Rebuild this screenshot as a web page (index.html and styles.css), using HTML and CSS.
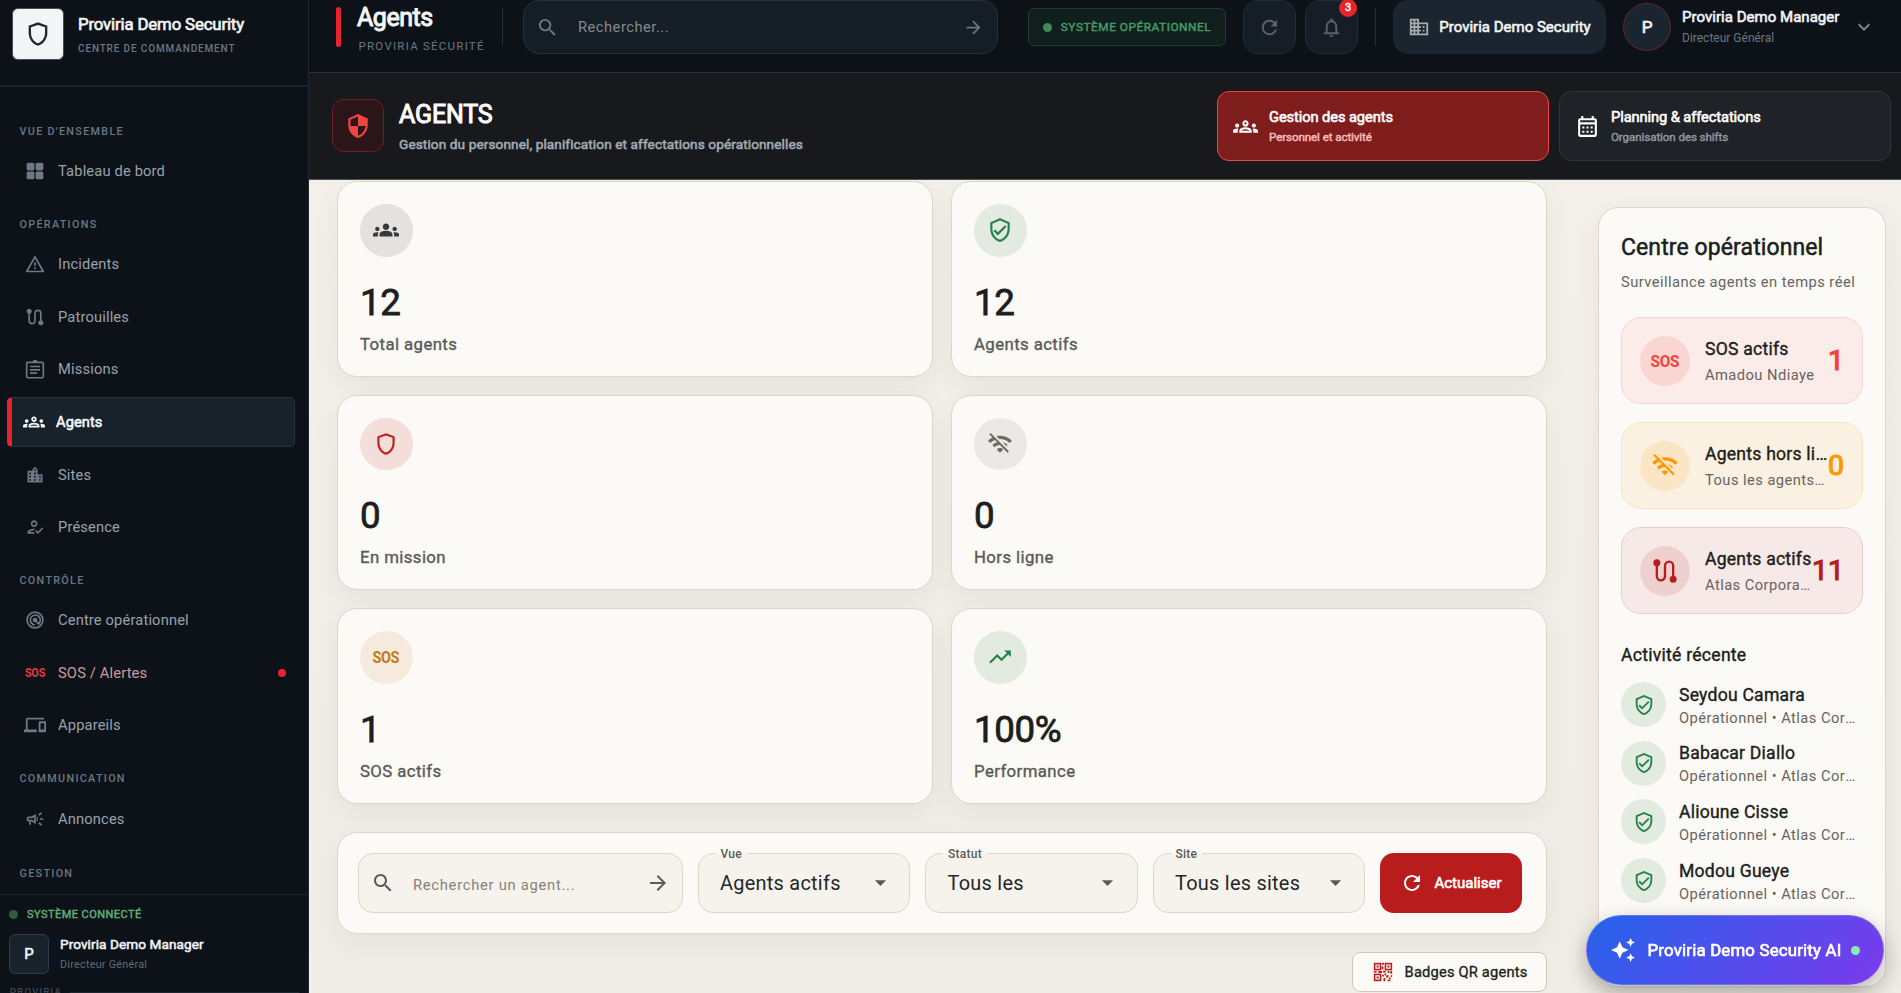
FILE: index.html
```
<!DOCTYPE html>
<html lang="fr">
<head>
  <meta charset="UTF-8" />
  <meta name="viewport" content="width=device-width, initial-scale=1.0"/>
  <title>Agents - Proviria Demo Security</title>
  <link rel="stylesheet" href="styles.css">
</head>
<body>

  <!-- Icon sprite -->
  <svg class="sprite" xmlns="http://www.w3.org/2000/svg">
    <symbol id="i-shield" viewBox="0 0 24 24"><path d="M12 2L4 5v6.090c0 5.050 3.410 9.760 8 10.910 4.590-1.150 8-5.860 8-10.910V5l-8-3zm6 9.090c0 4-2.550 7.700-6 8.830-3.450-1.130-6-4.820-6-8.830V6.310l6-2.120 6 2.120v4.780z"/></symbol>
    <symbol id="i-verified" viewBox="0 0 24 24"><path d="M12 1L3 5v6c0 5.550 3.840 10.740 9 12 5.160-1.260 9-6.450 9-12V5l-9-4zm7 10c0 4.520-2.980 8.690-7 9.930-4.020-1.240-7-5.410-7-9.930V6.300l7-3.110 7 3.110V11zM7.410 11.590L6 13l4 4 8-8-1.410-1.420L10 14.170z"/></symbol>
    <symbol id="i-security" viewBox="0 0 24 24"><path d="M12 1L3 5v6c0 5.550 3.840 10.740 9 12 5.160-1.260 9-6.450 9-12V5l-9-4zm0 10.990h7c-.53 4.120-3.280 7.790-7 8.940V12H5V6.300l7-3.110v8.800z"/></symbol>
    <symbol id="i-dashboard" viewBox="0 0 24 24"><rect x="2" y="2" width="9.300" height="9.300" rx="2"/><rect x="12.700" y="2" width="9.300" height="9.300" rx="2"/><rect x="2" y="12.700" width="9.300" height="9.300" rx="2"/><rect x="12.700" y="12.700" width="9.300" height="9.300" rx="2"/></symbol>
    <symbol id="i-warning" viewBox="0 0 24 24"><path d="M12 3.500L22 21H2z" fill="none" stroke="currentColor" stroke-width="2" stroke-linejoin="round"/><path d="M11 10h2v4.500h-2zM11 16h2v2h-2z"/></symbol>
    <symbol id="i-route" viewBox="0 0 24 24"><path d="M5 5v11.500a3.500 3.500 0 0 0 7 0v-9a3.500 3.500 0 0 1 7 0V19" fill="none" stroke="currentColor" stroke-width="2"/><circle cx="5" cy="5" r="3"/><circle cx="19" cy="19" r="3"/></symbol>
    <symbol id="i-assignment" viewBox="0 0 24 24"><rect x="2" y="4" width="20" height="18.500" rx="1.500" fill="none" stroke="currentColor" stroke-width="2"/><path d="M9 4a3 3 0 0 1 6 0zM6 8h12v2H6zM6 12h12v2H6zM6 16h8.500v2H6z"/></symbol>
    <symbol id="i-groups" viewBox="0 0 24 24"><path d="M12 12.750c1.630 0 3.070.39 4.240.9 1.080.48 1.760 1.560 1.760 2.730V18H6v-1.610c0-1.180.68-2.260 1.760-2.730 1.170-.52 2.610-.91 4.240-.91zM4 13c1.100 0 2-.9 2-2s-.9-2-2-2-2 .9-2 2 .9 2 2 2zm1.130 1.100c-.37-.06-.74-.1-1.130-.1-.99 0-1.930.21-2.780.58C.48 14.900 0 15.620 0 16.430V18h4.500v-1.610c0-.83.23-1.610.63-2.290zM20 13c1.100 0 2-.9 2-2s-.9-2-2-2-2 .9-2 2 .9 2 2 2zm4 3.430c0-.81-.48-1.530-1.220-1.850-.85-.37-1.790-.58-2.780-.58-.39 0-.76.04-1.130.1.4.68.63 1.460.63 2.290V18H24v-1.570zM12 6c1.660 0 3 1.340 3 3s-1.340 3-3 3-3-1.340-3-3 1.340-3 3-3z"/></symbol>
    <symbol id="i-groups-outline" viewBox="0 0 24 24"><path d="M4 13c1.100 0 2-.9 2-2s-.9-2-2-2-2 .9-2 2 .9 2 2 2zm1.130 1.100c-.37-.06-.74-.1-1.130-.1-.99 0-1.930.21-2.780.58C.48 14.900 0 15.620 0 16.430V18h4.500v-1.610c0-.83.23-1.610.63-2.290zM20 13c1.100 0 2-.9 2-2s-.9-2-2-2-2 .9-2 2 .9 2 2 2zm4 3.430c0-.81-.48-1.530-1.220-1.850-.85-.37-1.790-.58-2.780-.58-.39 0-.76.04-1.130.1.4.68.63 1.460.63 2.290V18H24v-1.570zM16.240 13.650c-1.170-.52-2.610-.9-4.240-.9s-3.070.39-4.240.9C6.680 14.130 6 15.210 6 16.390V18h12v-1.610c0-1.180-.68-2.260-1.760-2.740zM8.070 16c.09-.23.13-.39.91-.69.97-.38 1.990-.56 3.020-.56s2.050.18 3.020.56c.77.3.81.46.91.69H8.070zM12 8c.55 0 1 .45 1 1s-.45 1-1 1-1-.45-1-1 .45-1 1-1m0-2c-1.660 0-3 1.340-3 3s1.340 3 3 3 3-1.340 3-3-1.340-3-3-3z"/></symbol>
    <symbol id="i-city" viewBox="0 0 24 24"><path d="M15 11V5l-3-3-3 3v2H3v14h18V11h-6zm-8 8H5v-2h2v2zm0-4H5v-2h2v2zm0-4H5V9h2v2zm6 8h-2v-2h2v2zm0-4h-2v-2h2v2zm0-4h-2V9h2v2zm0-4h-2V5h2v2zm6 12h-2v-2h2v2zm0-4h-2v-2h2v2z"/></symbol>
    <symbol id="i-presence" viewBox="0 0 24 24"><path d="M11 12c2.210 0 4-1.790 4-4s-1.790-4-4-4-4 1.790-4 4 1.790 4 4 4zm0-6c1.100 0 2 .9 2 2s-.9 2-2 2-2-.9-2-2 .9-2 2-2zM5 18c.2-.63 2.570-1.680 4.960-1.940l2.040-2c-.39-.04-.68-.06-1-.06-2.670 0-8 1.340-8 4v2h9l-2-2H5zM20.600 12.500l-5.130 5.170-2.070-2.080L12 17l3.470 3.500L22 13.910z"/></symbol>
    <symbol id="i-radar" viewBox="0 0 24 24"><g fill="none" stroke="currentColor" stroke-width="2"><circle cx="12" cy="12" r="9.500"/><path d="M16 16.800a6 6 0 1 0-4 1.200M12 12l5 5.500"/></g><circle cx="12" cy="12" r="2.800"/></symbol>
    <symbol id="i-devices" viewBox="0 0 24 24"><path d="M4 6h18V4H4c-1.100 0-2 .9-2 2v11H0v3h14v-3H4V6zm19 2h-6c-.55 0-1 .45-1 1v10c0 .55.45 1 1 1h6c.55 0 1-.45 1-1V9c0-.55-.45-1-1-1zm-1 9h-4v-7h4v7z"/></symbol>
    <symbol id="i-campaign" viewBox="0 0 24 24"><path d="M18 11v2h4v-2h-4zM16 17.610c.96.71 2.210 1.650 3.200 2.390.4-.53.8-1.070 1.200-1.600-.99-.74-2.240-1.680-3.200-2.400-.4.54-.8 1.080-1.200 1.610zM20.400 5.600c-.4-.53-.8-1.070-1.200-1.600-.99.74-2.240 1.680-3.200 2.400.4.53.8 1.070 1.200 1.600.96-.72 2.210-1.650 3.200-2.400zM4 9c-1.100 0-2 .9-2 2v2c0 1.100.9 2 2 2h1v4h2v-4h1l5 3V6L8 9H4zm5.030 1.710L11 9.530v4.940l-1.970-1.180-.48-.29H4v-2h4.550l.48-.29zM15.500 12c0-1.330-.58-2.530-1.500-3.350v6.690c.92-.81 1.500-2.010 1.500-3.340z"/></symbol>
    <symbol id="i-search" viewBox="0 0 24 24"><path d="M15.500 14h-.79l-.28-.27C15.410 12.590 16 11.110 16 9.500 16 5.910 13.090 3 9.500 3S3 5.910 3 9.500 5.910 16 9.500 16c1.610 0 3.090-.59 4.230-1.570l.27.28v.79l5 4.990L20.490 19l-4.990-5zm-6 0C7.010 14 5 11.990 5 9.500S7.010 5 9.500 5 14 7.010 14 9.500 11.990 14 9.500 14z"/></symbol>
    <symbol id="i-arrow" viewBox="0 0 24 24"><path d="M12 4l-1.410 1.410L16.170 11H4v2h12.170l-5.580 5.590L12 20l8-8z"/></symbol>
    <symbol id="i-refresh" viewBox="0 0 24 24"><path d="M17.650 6.350C16.200 4.900 14.210 4 12 4c-4.420 0-7.990 3.580-7.990 8s3.570 8 7.990 8c3.730 0 6.840-2.550 7.730-6h-2.080c-.82 2.330-3.040 4-5.650 4-3.310 0-6-2.690-6-6s2.690-6 6-6c1.660 0 3.140.69 4.220 1.780L13 11h7V4l-2.350 2.350z"/></symbol>
    <symbol id="i-bell" viewBox="0 0 24 24"><path d="M12 22c1.100 0 2-.9 2-2h-4c0 1.100.89 2 2 2zm6-6v-5c0-3.070-1.640-5.640-4.500-6.320V4c0-.83-.67-1.500-1.500-1.500s-1.500.67-1.500 1.500v.68C7.630 5.360 6 7.920 6 11v5l-2 2v1h16v-1l-2-2zm-2 1H8v-6c0-2.480 1.510-4.500 4-4.500s4 2.020 4 4.500v6z"/></symbol>
    <symbol id="i-business" viewBox="0 0 24 24"><path d="M12 7V3H2v18h20V7H12zM6 19H4v-2h2v2zm0-4H4v-2h2v2zm0-4H4V9h2v2zm0-4H4V5h2v2zm4 12H8v-2h2v2zm0-4H8v-2h2v2zm0-4H8V9h2v2zm0-4H8V5h2v2zm10 12h-8v-2h2v-2h-2v-2h2v-2h-2V9h8v10zm-2-8h-2v2h2v-2zm0 4h-2v2h2v-2z"/></symbol>
    <symbol id="i-chevron" viewBox="0 0 24 24"><path d="M7.410 8.590L12 13.170l4.590-4.580L18 10l-6 6-6-6z"/></symbol>
    <symbol id="i-calendar" viewBox="0 0 24 24"><path d="M19 4h-1V2h-2v2H8V2H6v2H5c-1.110 0-1.990.9-1.990 2L3 20c0 1.100.89 2 2 2h14c1.100 0 2-.9 2-2V6c0-1.100-.9-2-2-2zm0 16H5V10h14v10zm0-12H5V6h14v2zM9 14H7v-2h2v2zm4 0h-2v-2h2v2zm4 0h-2v-2h2v2zm-8 4H7v-2h2v2zm4 0h-2v-2h2v2zm4 0h-2v-2h2v2z"/></symbol>
    <symbol id="i-wifi-off" viewBox="0 0 24 24"><path d="M22.990 9C19.150 5.160 13.800 3.760 8.840 4.780l2.520 2.520c3.470-.17 6.990 1.050 9.630 3.700l2-2zm-4 4c-1.290-1.290-2.840-2.130-4.490-2.560l3.530 3.530.96-.97zM2 3.050L5.070 6.100C3.600 6.820 2.220 7.780 1 9l1.990 2c1.240-1.240 2.670-2.160 4.200-2.770l2.240 2.240C7.810 10.890 6.270 11.730 5 13v.01L6.990 15c1.360-1.360 3.140-2.040 4.920-2.060L18.980 20l1.270-1.260L3.290 1.790 2 3.050zM9 17l3 3 3-3c-1.650-1.660-4.340-1.660-6 0z"/></symbol>
    <symbol id="i-trending" viewBox="0 0 24 24"><path d="M16 6l2.290 2.290-4.880 4.880-4-4L2 16.590 3.410 18l6-6 4 4 6.300-6.290L22 12V6z"/></symbol>
    <symbol id="i-dropdown" viewBox="0 0 24 24"><path d="M7 10l5 5 5-5z"/></symbol>
    <symbol id="i-sparkle" viewBox="0 0 24 24"><path d="M19 9l1.250-2.750L23 5l-2.750-1.250L19 1l-1.250 2.750L15 5l2.750 1.250L19 9zm-7.500.5L9 4 6.500 9.500 1 12l5.500 2.500L9 20l2.500-5.500L17 12l-5.500-2.500zM19 15l-1.250 2.750L15 19l2.750 1.250L19 23l1.250-2.750L23 19l-2.750-1.250L19 15z"/></symbol>
    <symbol id="i-qr" viewBox="0 0 24 24"><g fill="none" stroke="currentColor" stroke-width="1.700"><rect x="2.850" y="2.850" width="6.500" height="6.500"/><rect x="14.650" y="2.850" width="6.500" height="6.500"/><rect x="2.850" y="14.650" width="6.500" height="6.500"/></g><path d="M5 5h2.200v2.200H5zM16.800 5H19v2.200h-2.200zM5 16.800h2.200V19H5zM11 2h2v2h-2zM10.500 6h2v3h-2zM2 11h3v1.500H2zM7 11h4v2H7zM12 10.500h3v2h-3zM17 11h2v2h-2zM20 11h2v3h-2zM11 15h2v2h-2zM13.500 13.500h2v2h-2zM15.500 15.500h2.500v2.500h-2.500zM18.500 18h2v2h-2zM12.500 18.500h2V22h-2zM17 20.500h3V22h-3zM20.500 15.500H22v2h-1.500z"/></symbol>
  </svg>

  <div class="app">
    <aside class="sidebar">
      <div class="brand">
        <div class="brand-logo"><svg class="icon"><use href="#i-shield"/></svg></div>
        <div>
          <div class="brand-name">Proviria Demo Security</div>
          <div class="brand-sub">CENTRE DE COMMANDEMENT</div>
        </div>
      </div>

      <nav class="nav">
        <h3>VUE D'ENSEMBLE</h3>
        <a class="nav-item"><svg class="icon"><use href="#i-dashboard"/></svg>Tableau de bord</a>
        <h3>OPÉRATIONS</h3>
        <a class="nav-item"><svg class="icon"><use href="#i-warning"/></svg>Incidents</a>
        <a class="nav-item"><svg class="icon"><use href="#i-route"/></svg>Patrouilles</a>
        <a class="nav-item"><svg class="icon"><use href="#i-assignment"/></svg>Missions</a>
        <a class="nav-item active"><svg class="icon"><use href="#i-groups-outline"/></svg>Agents</a>
        <a class="nav-item"><svg class="icon"><use href="#i-city"/></svg>Sites</a>
        <a class="nav-item"><svg class="icon"><use href="#i-presence"/></svg>Présence</a>
        <h3>CONTRÔLE</h3>
        <a class="nav-item"><svg class="icon"><use href="#i-radar"/></svg>Centre opérationnel</a>
        <a class="nav-item alert"><span class="sos">SOS</span>SOS / Alertes<span class="alert-dot"></span></a>
        <a class="nav-item"><svg class="icon wide"><use href="#i-devices"/></svg>Appareils</a>
        <h3>COMMUNICATION</h3>
        <a class="nav-item"><svg class="icon"><use href="#i-campaign"/></svg>Annonces</a>
        <h3>GESTION</h3>
      </nav>

      <div class="sidebar-footer">
        <div class="connected"><span class="dot"></span>SYSTÈME CONNECTÉ</div>
        <div class="user">
          <div class="user-avatar">P</div>
          <div>
            <div class="user-name">Proviria Demo Manager</div>
            <div class="user-role">Directeur Général</div>
          </div>
        </div>
        <div class="powered">PROVIRIA<span></span></div>
      </div>
    </aside>

    <div class="main">
      <header class="topbar">
        <span class="accent"></span>
        <div class="page-title">
          <h1>Agents</h1>
          <p>PROVIRIA SÉCURITÉ</p>
        </div>
        <span class="divider"></span>
        <div class="search">
          <svg class="icon"><use href="#i-search"/></svg>
          <span>Rechercher...</span>
          <svg class="icon arrow"><use href="#i-arrow"/></svg>
        </div>
        <div class="status"><span class="dot"></span>SYSTÈME OPÉRATIONNEL</div>
        <button class="square"><svg class="icon"><use href="#i-refresh"/></svg></button>
        <button class="square"><svg class="icon"><use href="#i-bell"/></svg><span class="badge">3</span></button>
        <span class="divider second"></span>
        <div class="company"><svg class="icon"><use href="#i-business"/></svg>Proviria Demo Security</div>
        <div class="avatar">P</div>
        <div class="manager">
          <div class="manager-name">Proviria Demo Manager</div>
          <div class="manager-role">Directeur Général</div>
        </div>
        <svg class="icon chevron"><use href="#i-chevron"/></svg>
      </header>

      <section class="subheader">
        <div class="subheader-icon"><svg class="icon"><use href="#i-security"/></svg></div>
        <div class="subheader-text">
          <h2>AGENTS</h2>
          <p>Gestion du personnel, planification et affectations opérationnelles</p>
        </div>
        <div class="tab selected">
          <svg class="icon"><use href="#i-groups-outline"/></svg>
          <div>
            <div class="tab-title">Gestion des agents</div>
            <div class="tab-sub">Personnel et activité</div>
          </div>
        </div>
        <div class="tab">
          <svg class="icon"><use href="#i-calendar"/></svg>
          <div>
            <div class="tab-title">Planning &amp; affectations</div>
            <div class="tab-sub">Organisation des shifts</div>
          </div>
        </div>
      </section>

      <div class="content">
        <div class="left">
          <div class="stats">
            <div class="card">
              <div class="circle dark"><svg class="icon"><use href="#i-groups"/></svg></div>
              <div class="value">12</div>
              <div class="label">Total agents</div>
            </div>
            <div class="card">
              <div class="circle green"><svg class="icon"><use href="#i-verified"/></svg></div>
              <div class="value">12</div>
              <div class="label">Agents actifs</div>
            </div>
            <div class="card">
              <div class="circle red"><svg class="icon"><use href="#i-shield"/></svg></div>
              <div class="value">0</div>
              <div class="label">En mission</div>
            </div>
            <div class="card">
              <div class="circle grey"><svg class="icon"><use href="#i-wifi-off"/></svg></div>
              <div class="value">0</div>
              <div class="label">Hors ligne</div>
            </div>
            <div class="card">
              <div class="circle amber"><span class="sos">SOS</span></div>
              <div class="value">1</div>
              <div class="label">SOS actifs</div>
            </div>
            <div class="card">
              <div class="circle green"><svg class="icon"><use href="#i-trending"/></svg></div>
              <div class="value">100%</div>
              <div class="label">Performance</div>
            </div>
          </div>

          <div class="filters">
            <div class="filter-search">
              <svg class="icon"><use href="#i-search"/></svg>
              <span>Rechercher un agent...</span>
              <svg class="icon"><use href="#i-arrow"/></svg>
            </div>
            <div class="select"><label>Vue</label>Agents actifs<svg class="icon"><use href="#i-dropdown"/></svg></div>
            <div class="select"><label>Statut</label>Tous les<svg class="icon"><use href="#i-dropdown"/></svg></div>
            <div class="select"><label>Site</label>Tous les sites<svg class="icon"><use href="#i-dropdown"/></svg></div>
            <button class="refresh"><svg class="icon"><use href="#i-refresh"/></svg>Actualiser</button>
          </div>

          <button class="qr"><svg class="icon"><use href="#i-qr"/></svg>Badges QR agents</button>
        </div>

        <aside class="ops">
          <h2>Centre opérationnel</h2>
          <p class="ops-sub">Surveillance agents en temps réel</p>

          <div class="ops-card sos-card">
            <div class="ops-icon"><span class="sos">SOS</span></div>
            <div class="ops-text"><b>SOS actifs</b><span>Amadou Ndiaye</span></div>
            <strong>1</strong>
          </div>
          <div class="ops-card offline-card">
            <div class="ops-icon"><svg class="icon"><use href="#i-wifi-off"/></svg></div>
            <div class="ops-text"><b>Agents hors ligne</b><span>Tous les agents sont connectés</span></div>
            <strong>0</strong>
          </div>
          <div class="ops-card active-card">
            <div class="ops-icon"><svg class="icon"><use href="#i-route"/></svg></div>
            <div class="ops-text"><b>Agents actifs</b><span>Atlas Corporation</span></div>
            <strong>11</strong>
          </div>

          <h3>Activité récente</h3>
          <div class="activity">
            <div class="activity-icon"><svg class="icon"><use href="#i-verified"/></svg></div>
            <div class="activity-text"><b>Seydou Camara</b><span>Opérationnel • Atlas Corporation</span></div>
          </div>
          <div class="activity">
            <div class="activity-icon"><svg class="icon"><use href="#i-verified"/></svg></div>
            <div class="activity-text"><b>Babacar Diallo</b><span>Opérationnel • Atlas Corporation</span></div>
          </div>
          <div class="activity">
            <div class="activity-icon"><svg class="icon"><use href="#i-verified"/></svg></div>
            <div class="activity-text"><b>Alioune Cisse</b><span>Opérationnel • Atlas Corporation</span></div>
          </div>
          <div class="activity">
            <div class="activity-icon"><svg class="icon"><use href="#i-verified"/></svg></div>
            <div class="activity-text"><b>Modou Gueye</b><span>Opérationnel • Atlas Corporation</span></div>
          </div>
        </aside>
      </div>
    </div>
  </div>

  <button class="ai-button"><svg class="icon"><use href="#i-sparkle"/></svg>Proviria Demo Security AI<span class="dot"></span></button>

</body>
</html>
```
FILE: styles.css
```
* {
  box-sizing: border-box;
}

body {
  font-family: Roboto, "Liberation Sans", sans-serif;
  background: #0d1219;
  margin: 0;
  overflow: hidden;
}

h1, h2, h3, p {
  margin: 0;
}

button {
  font-family: inherit;
  cursor: pointer;
}

/* Bold text: regular weight thickened with a thin stroke */
.brand-name, .nav-item.active, .connected, .user-avatar, .user-name,
.page-title h1, .status, .badge, .company, .avatar, .manager-name,
.subheader-text h2, .subheader-text p, .tab-title, .tab-sub,
.refresh, .ops-card strong, .ai-button {
  font-weight: 400;
  -webkit-text-stroke: 0.040em currentColor;
}

/* Semi-bold */
.value, .label, .qr, .ops h2, .ops h3, .ops-text b, .activity-text b {
  font-weight: 400;
  -webkit-text-stroke: 0.022em currentColor;
}

.sprite {
  display: none;
}

.icon {
  width: 20px;
  height: 20px;
  fill: currentColor;
  flex-shrink: 0;
  display: block;
}

.sos {
  font-weight: 700;
  flex-shrink: 0;
  transform: scaleX(0.900);
}

.app {
  display: flex;
  height: 993px;
}

/* Sidebar */
.sidebar {
  width: 309px;
  flex-shrink: 0;
  display: flex;
  flex-direction: column;
  background: #0d1219;
  border-right: 1px solid #1e2932;
}

.brand {
  height: 87px;
  display: flex;
  gap: 14px;
  padding: 8px 12px;
  border-bottom: 2px solid #18222b;
}

.brand-logo {
  width: 52px;
  height: 52px;
  display: flex;
  align-items: center;
  justify-content: center;
  background: #f2f4f6;
  color: #20272e;
  border: 1px solid #434e58;
  border-radius: 6px;
}

.brand-logo .icon {
  width: 28px;
  height: 28px;
}

.brand-name {
  margin-top: 6px;
  color: #f2f4f6;
  font-size: 16.800px;
  line-height: 20px;
  letter-spacing: -0.150px;
}

.brand-sub {
  margin-top: 8px;
  color: #6b7781;
  font-size: 10px;
  line-height: 14px;
  font-weight: 500;
  letter-spacing: 0.850px;
}

.nav {
  flex: 1;
  min-height: 0;
  overflow: hidden;
  padding: 18.700px 13px 0 7px;
}

.nav h3 {
  height: 40.400px;
  padding: 18px 12.500px 0;
  color: #6b7781;
  font-size: 10.800px;
  line-height: 16px;
  font-weight: 500;
  letter-spacing: 1.300px;
}

.nav h3:last-child {
  padding-top: 20px;
}

.nav-item {
  height: 50px;
  margin-bottom: 2.640px;
  padding: 0 9px 0 18px;
  display: flex;
  align-items: center;
  gap: 13px;
  color: #98a2ab;
  font-size: 14.700px;
  letter-spacing: 0.150px;
}

.nav-item .icon {
  color: #6d7984;
}

.nav-item .wide {
  width: 22px;
  height: 22px;
  margin: 0 -1px;
}

.nav-item.active {
  padding-left: 11px;
  gap: 11px;
  background: #18222b;
  border: 1px solid #27323c;
  border-left: 5px solid #e5242c;
  border-radius: 5px;
  color: #f4f6f8;
  letter-spacing: 0.050px;
}

.nav-item.active .icon {
  width: 22px;
  height: 22px;
  color: #f4f6f8;
}

.nav-item.alert {
  color: #cf9a9d;
}

.nav-item .sos {
  width: 20px;
  display: flex;
  justify-content: center;
  color: #e03a42;
  font-size: 12px;
  letter-spacing: -0.200px;
}

.alert-dot {
  width: 8px;
  height: 8px;
  margin-left: auto;
  background: #e5242c;
  border-radius: 50%;
}

.dot {
  border-radius: 50%;
  flex-shrink: 0;
}

.sidebar-footer {
  height: 99px;
  padding: 11px 9px 0;
  border-top: 1px solid #1c2731;
  overflow: hidden;
}

.connected {
  display: flex;
  align-items: center;
  gap: 9px;
  height: 16px;
  color: #62b07b;
  font-size: 11px;
  letter-spacing: 0.450px;
}

.connected .dot {
  width: 9px;
  height: 9px;
  background: #2f5c41;
}

.user {
  display: flex;
  gap: 11px;
  margin-top: 12px;
}

.user-avatar {
  width: 40px;
  height: 40px;
  display: flex;
  align-items: center;
  justify-content: center;
  background: #18222b;
  border: 1px solid #2f3b46;
  border-radius: 6px;
  color: #f2f4f6;
  font-size: 15px;
}

.user-name {
  margin-top: 2px;
  color: #f2f4f6;
  font-size: 13.600px;
  line-height: 17px;
  letter-spacing: 0.080px;
}

.user-role {
  margin-top: 5px;
  color: #5f6a74;
  font-size: 10.800px;
  line-height: 14px;
  letter-spacing: 0.250px;
}

.powered {
  display: flex;
  align-items: center;
  gap: 8px;
  margin: 10px 0 0 1px;
  color: #4a555f;
  font-size: 9.500px;
  line-height: 16px;
  letter-spacing: 1.300px;
}

.powered span {
  flex: 1;
  height: 1px;
  background: #1c2731;
}

/* Top bar */
.main {
  flex: 1;
  min-width: 0;
  display: flex;
  flex-direction: column;
}

.topbar {
  height: 73px;
  flex-shrink: 0;
  display: flex;
  align-items: center;
  padding: 0 25px 18px 27px;
  background: #0d1219;
  border-bottom: 1px solid #26323d;
}

.accent {
  width: 5px;
  height: 40px;
  margin-right: 16px;
  background: #e5242c;
  border-radius: 3px;
}

.page-title {
  width: 145px;
}

.page-title h1 {
  padding-top: 1px;
  color: #f4f6f8;
  font-size: 25px;
  line-height: 30px;
  letter-spacing: -0.450px;
}

.page-title p {
  margin: 6px 0 0 1.500px;
  color: #6b7781;
  font-size: 11.500px;
  line-height: 14px;
  letter-spacing: 1.250px;
}

.divider {
  width: 1px;
  height: 38px;
  margin: 0 20px 0 0;
  background: #222d37;
}

.search {
  width: 475px;
  height: 54px;
  display: flex;
  align-items: center;
  gap: 19px;
  padding: 0 13px 0 12px;
  background: #151d26;
  border: 1px solid #25313b;
  border-radius: 16px;
  color: #85898e;
  font-size: 14.700px;
  letter-spacing: 0.500px;
}

.search .icon {
  width: 23px;
  height: 23px;
  color: #6b7781;
}

.search .arrow {
  width: 21px;
  height: 21px;
}

.search span {
  flex: 1;
}

.status {
  width: 198px;
  height: 38px;
  margin: 0 17px 0 30px;
  display: flex;
  align-items: center;
  justify-content: center;
  gap: 9px;
  background: #111e1e;
  border: 1px solid #1d3d2e;
  border-radius: 6px;
  color: #469b64;
  font-size: 11.800px;
  letter-spacing: 0.550px;
  white-space: nowrap;
}

.status .dot {
  width: 9px;
  height: 9px;
  background: #3f8a58;
}

.square {
  position: relative;
  width: 53px;
  height: 54px;
  margin-right: 9px;
  padding: 0;
  display: flex;
  align-items: center;
  justify-content: center;
  background: #151d26;
  border: 1px solid #222d38;
  border-radius: 15px;
  color: #5c6167;
}

.square .icon {
  width: 23px;
  height: 23px;
}

.badge {
  position: absolute;
  top: -2px;
  right: 0;
  width: 18px;
  height: 18px;
  background: #e5242c;
  border-radius: 50%;
  color: #fff;
  font-size: 11px;
  line-height: 18px;
}

.divider.second {
  margin: 0 17px 0 8px;
}

.company {
  width: 213px;
  height: 54px;
  display: flex;
  align-items: center;
  justify-content: center;
  gap: 9px;
  background: #1b252f;
  border-radius: 15px;
  color: #f2f4f6;
  font-size: 15px;
  letter-spacing: 0;
  white-space: nowrap;
}

.company .icon {
  width: 22px;
  height: 22px;
  color: #a8abae;
}

.avatar {
  width: 48px;
  height: 48px;
  margin: 0 11px 0 17px;
  display: flex;
  align-items: center;
  justify-content: center;
  background: #1b252f;
  border: 1px solid #6a2330;
  border-radius: 50%;
  color: #f2f4f6;
  font-size: 17px;
}

.manager {
  flex: 1;
  white-space: nowrap;
}

.manager-name {
  color: #f2f4f6;
  font-size: 15px;
  line-height: 20px;
  letter-spacing: 0.030px;
}

.manager-role {
  margin-top: 1px;
  color: #6b7781;
  font-size: 12px;
  line-height: 20px;
}

.chevron {
  width: 24px;
  height: 24px;
  color: #7b858e;
}

/* Agents header */
.subheader {
  height: 107px;
  flex-shrink: 0;
  display: flex;
  align-items: center;
  padding: 0 10px 1px 23px;
  background: #18191c;
  border-bottom: 1px solid #4a5058;
}

.subheader-icon {
  width: 52px;
  height: 53px;
  margin-right: 15px;
  display: flex;
  align-items: center;
  justify-content: center;
  background: #2a1518;
  border: 1px solid #6f1f23;
  border-radius: 12px;
  color: #ef4444;
}

.subheader-icon .icon {
  width: 26px;
  height: 26px;
}

.subheader-text {
  flex: 1;
}

.subheader-text h2 {
  padding-top: 2px;
  color: #fff;
  font-size: 25px;
  line-height: 30px;
  letter-spacing: -0.150px;
}

.subheader-text p {
  margin-top: 5px;
  color: #a3abb5;
  font-size: 13.650px;
  line-height: 18px;
  letter-spacing: 0.090px;
}

.tab {
  width: 332px;
  height: 70px;
  margin-left: 10px;
  padding: 1px 15px 0;
  display: flex;
  align-items: center;
  gap: 11px;
  background: #1f2226;
  border: 1px solid #30343a;
  border-radius: 12px;
  color: #fff;
}

.tab .icon {
  width: 25px;
  height: 25px;
}

.tab-title {
  font-size: 14.700px;
  line-height: 19px;
  letter-spacing: -0.100px;
}

.tab-sub {
  margin-top: 2px;
  color: #8e96a3;
  font-size: 11.550px;
  line-height: 16px;
  letter-spacing: -0.070px;
}

.tab.selected {
  background: #7f1d1d;
  border-color: #ef4444;
}

.tab.selected .tab-sub {
  color: #fbbcbc;
}

/* Content */
.content {
  flex: 1;
  min-height: 0;
  overflow: hidden;
  display: flex;
  justify-content: space-between;
  padding: 1px 15px 0 28px;
  background: linear-gradient(180deg, #f3f0e9, #f0ede6);
}

.left {
  width: 1210px;
  display: flex;
  flex-direction: column;
}

.stats {
  display: grid;
  grid-template-columns: 1fr 1fr;
  gap: 18px;
}

.card, .filters, .ops {
  background: #fbfaf6;
  border: 1px solid #dcd6cb;
  box-shadow: 0 10px 28px rgba(30, 30, 40, 0.055);
}

.card {
  height: 195.600px;
  padding: 22px;
  border-radius: 20px;
}

.circle {
  width: 52.500px;
  height: 52.500px;
  display: flex;
  align-items: center;
  justify-content: center;
  border-radius: 50%;
}

.circle .icon {
  width: 26px;
  height: 26px;
}

.circle .sos {
  font-size: 16px;
  letter-spacing: -0.400px;
}

.dark {
  background: #e3e2de;
  color: #37393a;
}

.green {
  background: #e3ebe1;
  color: #26804a;
}

.red {
  background: #f4deda;
  color: #c11d1f;
}

.grey {
  background: #eae9e5;
  color: #6e6b66;
}

.amber {
  background: #f5eadb;
  color: #bd7b1c;
}

.value {
  margin-top: 24px;
  color: #1c1e20;
  font-size: 36.700px;
  line-height: 44px;
  letter-spacing: -0.400px;
}

.label {
  margin-top: 6px;
  color: #5b5a57;
  font-size: 16.800px;
  line-height: 26px;
  letter-spacing: 0.400px;
}

.filters {
  height: 102px;
  margin-top: 28px;
  padding: 0 24px 0 20px;
  display: flex;
  align-items: center;
  gap: 15px;
  border-radius: 20px;
}

.filter-search, .select {
  height: 60px;
  display: flex;
  align-items: center;
  background: #f6f3ec;
  border: 1px solid #dcd6cb;
  border-radius: 15px;
}

.filter-search {
  flex: 1;
  gap: 18px;
  padding: 0 12px;
  color: #85827c;
  font-size: 14.700px;
  letter-spacing: 0.750px;
}

.filter-search span {
  flex: 1;
  padding-top: 4px;
}

.filter-search .icon {
  width: 24px;
  height: 24px;
  color: #5b5a57;
}

.select {
  position: relative;
  width: 212.500px;
  justify-content: space-between;
  padding: 0 15.500px 0 21.500px;
  color: #24272a;
  font-size: 19.950px;
  letter-spacing: 0.250px;
}

/* Floating caption over the top border */
.select label {
  position: absolute;
  top: -8px;
  left: 17px;
  padding: 0 5px;
  background: linear-gradient(180deg, #fbfaf6 50%, #f6f3ec 50%);
  color: #5b5a57;
  font-size: 12px;
  line-height: 16px;
  font-weight: 500;
}

.select .icon {
  width: 27px;
  height: 27px;
  color: #5b5a57;
}

.refresh {
  width: 142px;
  height: 60px;
  padding: 0;
  display: flex;
  align-items: center;
  justify-content: center;
  gap: 10px;
  background: #b91c1c;
  border: 0;
  border-radius: 14px;
  color: #fff;
  font-size: 15px;
}

.refresh .icon {
  width: 24px;
  height: 24px;
}

.qr {
  align-self: flex-end;
  width: 195px;
  height: 40px;
  margin-top: 18px;
  padding: 0;
  display: flex;
  align-items: center;
  justify-content: center;
  gap: 11px;
  background: #fbfaf6;
  border: 1px solid #cfc6b8;
  border-radius: 8px;
  color: #1c1e20;
  font-size: 14.700px;
  letter-spacing: 0.180px;
}

.qr .icon {
  width: 22px;
  height: 22px;
  color: #b91c1c;
}

/* Operations panel */
.ops {
  width: 288px;
  height: 780px;
  margin-top: 26px;
  padding: 22px;
  border-radius: 20px;
}

.ops h2 {
  margin-top: 3px;
  color: #1c1e20;
  font-size: 23px;
  line-height: 30px;
  letter-spacing: 0.100px;
}

.ops-sub {
  margin: 8px 0 24px;
  color: #67645f;
  font-size: 14.700px;
  line-height: 22px;
  letter-spacing: 0.450px;
  white-space: nowrap;
}

.ops-card {
  height: 87px;
  margin-bottom: 18px;
  padding: 0 18px 0 17.500px;
  display: flex;
  align-items: center;
  border: 1px solid;
  border-radius: 20px;
}

.ops-icon {
  width: 50px;
  height: 50px;
  margin-right: 15.500px;
  display: flex;
  align-items: center;
  justify-content: center;
  flex-shrink: 0;
  border-radius: 50%;
}

.ops-icon .icon {
  width: 28px;
  height: 28px;
}

.ops-icon .sos {
  font-size: 17px;
  letter-spacing: -0.300px;
}

.ops-text {
  flex: 1;
  min-width: 0;
}

.ops-text b, .ops-text span, .activity-text b, .activity-text span {
  display: block;
  overflow: hidden;
  text-overflow: ellipsis;
  white-space: nowrap;
}

.ops-text b, .activity-text b {
  color: #1c1e20;
  font-size: 17.600px;
  line-height: 26px;
  letter-spacing: 0.220px;
}

.ops-text span, .activity-text span {
  color: #67645f;
  font-size: 14.700px;
  line-height: 20px;
  letter-spacing: 0.450px;
}

.ops-text span {
  margin-top: 3px;
}

.ops-card strong {
  font-size: 28.500px;
}

.sos-card {
  background: #fbecea;
  border-color: #f8d3cf;
  color: #f44336;
}

.sos-card .ops-icon {
  background: #fad6d2;
}

.offline-card {
  background: #fbf1e2;
  border-color: #fbe3c0;
  color: #ff9800;
}

.offline-card .ops-icon {
  background: #fce5c5;
}

.active-card {
  background: #f7e9e7;
  border-color: #eccdcb;
  color: #b91c1c;
}

.active-card .ops-icon {
  background: #eed0ce;
}

.ops h3 {
  margin: 28px 0 14px;
  color: #1c1e20;
  font-size: 17.600px;
  line-height: 26px;
  letter-spacing: 0.250px;
}

.activity {
  height: 45px;
  margin-bottom: 13.700px;
  display: flex;
  align-items: center;
  gap: 13px;
}

.activity-icon {
  width: 45px;
  height: 45px;
  display: flex;
  align-items: center;
  justify-content: center;
  flex-shrink: 0;
  background: #e3ebe1;
  border-radius: 50%;
  color: #26804a;
}

.activity-icon .icon {
  width: 22px;
  height: 22px;
}

.activity-text {
  min-width: 0;
  padding-right: 5px;
}

/* Floating assistant button */
.ai-button {
  position: fixed;
  right: 17px;
  bottom: 8px;
  width: 298px;
  height: 70px;
  padding: 0;
  display: flex;
  align-items: center;
  justify-content: center;
  gap: 12px;
  background: linear-gradient(135deg, #2563eb, #7c3aed);
  border: 1px solid rgba(255, 255, 255, 0.180);
  border-radius: 35px;
  box-shadow: 0 8px 22px rgba(0, 0, 0, 0.280);
  color: #fff;
  font-size: 16.800px;
  letter-spacing: 0.200px;
  white-space: nowrap;
}

.ai-button .icon {
  width: 26px;
  height: 26px;
}

.ai-button .dot {
  width: 9px;
  height: 9px;
  margin-left: -2px;
  background: #86efac;
}
```
